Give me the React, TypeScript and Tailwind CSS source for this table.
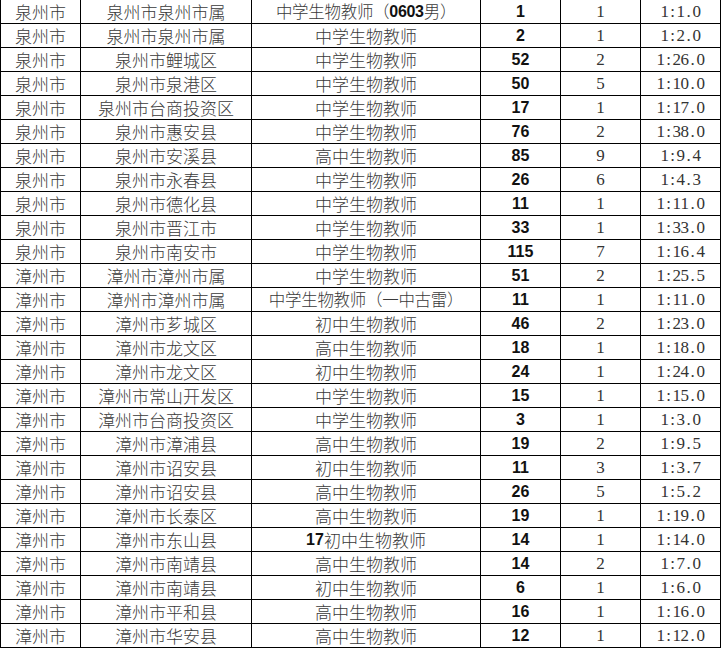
const rows: [string, string, string, string, string, string][] = [
    ['泉州市', '泉州市泉州市属', '中学生物教师（0603男）', '1', '1', '1:1.0'],
    ['泉州市', '泉州市泉州市属', '中学生物教师', '2', '1', '1:2.0'],
    ['泉州市', '泉州市鲤城区', '中学生物教师', '52', '2', '1:26.0'],
    ['泉州市', '泉州市泉港区', '中学生物教师', '50', '5', '1:10.0'],
    ['泉州市', '泉州市台商投资区', '中学生物教师', '17', '1', '1:17.0'],
    ['泉州市', '泉州市惠安县', '中学生物教师', '76', '2', '1:38.0'],
    ['泉州市', '泉州市安溪县', '高中生物教师', '85', '9', '1:9.4'],
    ['泉州市', '泉州市永春县', '中学生物教师', '26', '6', '1:4.3'],
    ['泉州市', '泉州市德化县', '中学生物教师', '11', '1', '1:11.0'],
    ['泉州市', '泉州市晋江市', '中学生物教师', '33', '1', '1:33.0'],
    ['泉州市', '泉州市南安市', '中学生物教师', '115', '7', '1:16.4'],
    ['漳州市', '漳州市漳州市属', '中学生物教师', '51', '2', '1:25.5'],
    ['漳州市', '漳州市漳州市属', '中学生物教师（一中古雷）', '11', '1', '1:11.0'],
    ['漳州市', '漳州市芗城区', '初中生物教师', '46', '2', '1:23.0'],
    ['漳州市', '漳州市龙文区', '高中生物教师', '18', '1', '1:18.0'],
    ['漳州市', '漳州市龙文区', '初中生物教师', '24', '1', '1:24.0'],
    ['漳州市', '漳州市常山开发区', '中学生物教师', '15', '1', '1:15.0'],
    ['漳州市', '漳州市台商投资区', '中学生物教师', '3', '1', '1:3.0'],
    ['漳州市', '漳州市漳浦县', '高中生物教师', '19', '2', '1:9.5'],
    ['漳州市', '漳州市诏安县', '初中生物教师', '11', '3', '1:3.7'],
    ['漳州市', '漳州市诏安县', '高中生物教师', '26', '5', '1:5.2'],
    ['漳州市', '漳州市长泰区', '高中生物教师', '19', '1', '1:19.0'],
    ['漳州市', '漳州市东山县', '17初中生物教师', '14', '1', '1:14.0'],
    ['漳州市', '漳州市南靖县', '高中生物教师', '14', '2', '1:7.0'],
    ['漳州市', '漳州市南靖县', '初中生物教师', '6', '1', '1:6.0'],
    ['漳州市', '漳州市平和县', '高中生物教师', '16', '1', '1:16.0'],
    ['漳州市', '漳州市华安县', '高中生物教师', '12', '1', '1:12.0'],
];

const cjk = "font-['Noto_Sans_CJK_SC',sans-serif] text-[17px] font-light text-[#3a3a3a]";
const arial = "font-['Liberation_Sans',sans-serif] font-bold text-[16px] text-[#111]";
const serif = "font-['Liberation_Serif',serif] text-[17px] text-[#333]";

// digits inside the post name are set in Arial, like the sheet does
function Post({ text }: { text: string }) {
    const parts = text.split(/(\d+)/).filter(Boolean);
    const long = text.length > 11;
    return (
        <span className={`flex items-center whitespace-nowrap leading-none [text-spacing-trim:space-all] ${long ? 'text-[16.5px] tracking-[-0.3px]' : ''}`}>
            {parts.map((p, i) =>
                /^\d+$/.test(p) ? (
                    <span key={i} className={`${arial} leading-none`}>{p}</span>
                ) : (
                    <span key={i} className="leading-none">{p}</span>
                )
            )}
        </span>
    );
}

// half-width cells of 8px, like SimSun's fixed-pitch ASCII
function Ratio({ text }: { text: string }) {
    return (
        <span className="flex">
            {text.split('').map((c, i) => (
                <span key={i} className="inline-block w-[8px] text-center">{c}</span>
            ))}
        </span>
    );
}

const cell = 'bg-white flex items-center justify-center leading-[23px] overflow-hidden';

export default function App() {
    return (
        <div className="w-[721px] h-[649px] bg-white overflow-hidden">
            <div className="grid grid-cols-[79px_170px_228px_79px_79px_79px] auto-rows-[23px] gap-px bg-black pl-px pr-px pb-px">
                {rows.map((r, i) => (
                    <div key={i} className="contents">
                        <div className={`${cell} ${cjk}`}>{r[0]}</div>
                        <div className={`${cell} whitespace-nowrap ${cjk}`}>{r[1]}</div>
                        <div className={`${cell} ${cjk}`}>
                            <Post text={r[2]} />
                        </div>
                        <div className={`${cell} ${arial}`}>{r[3]}</div>
                        <div className={`${cell} ${serif}`}>{r[4]}</div>
                        <div className={`${cell} ${serif} text-[16px]`}>
                            <Ratio text={r[5]} />
                        </div>
                    </div>
                ))}
            </div>
        </div>
    );
}
